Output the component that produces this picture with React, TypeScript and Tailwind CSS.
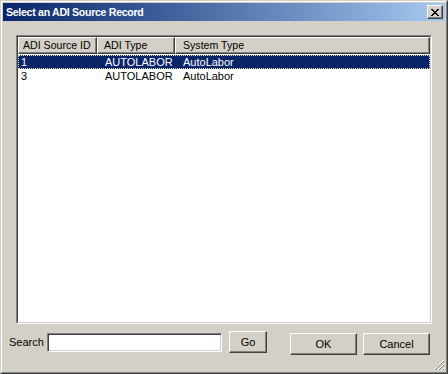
import React from "react";

const font = { fontFamily: '"Liberation Sans", Arial, sans-serif' };

function RaisedButton({ label, className }: { label: string; className: string }) {
  return (
    <div
      className={
        "flex items-center justify-center border border-t-white border-l-white border-r-[#404040] border-b-[#404040] shadow-[inset_-1px_-1px_0_#808080] bg-[#d4d0c8] text-[11px] text-black " +
        className
      }
    >
      {label}
    </div>
  );
}

export default function App() {
  const rows = [
    { id: "1", type: "AUTOLABOR", sys: "AutoLabor", sel: true },
    { id: "3", type: "AUTOLABOR", sys: "AutoLabor", sel: false },
  ];
  return (
    <div className="w-[448px] h-[374px] relative" style={font}>
      <div className="w-full h-full border border-t-[#d4d0c8] border-l-[#d4d0c8] border-r-[#404040] border-b-[#404040] bg-[#d4d0c8]">
        <div className="w-full h-full border border-t-white border-l-white border-r-[#808080] border-b-[#808080] p-px flex flex-col">
          {/* Title bar */}
          <div className="h-[18px] flex items-center justify-between pl-[3px] pr-[2px] bg-gradient-to-r from-[#0a246a] to-[#a6caf0]">
            <span className="text-white font-bold text-[10.6px] tracking-[-0.3px] leading-none">Select an ADI Source Record</span>
            <div className="w-[16px] h-[14px] flex items-center justify-center border border-t-white border-l-white border-r-[#404040] border-b-[#404040] shadow-[inset_-1px_-1px_0_#808080] bg-[#d4d0c8]">
              <svg width="8" height="7" viewBox="0 0 8 7" shapeRendering="crispEdges">
                <path
                  d="M0 0h2v1H0zM6 0h2v1H6zM1 1h2v1H1zM5 1h2v1H5zM2 2h4v1H2zM3 3h2v1H3zM2 4h4v1H2zM1 5h2v1H1zM5 5h2v1H5zM0 6h2v1H0zM6 6h2v1H6z"
                  fill="#000"
                />
              </svg>
            </div>
          </div>

          {/* List view */}
          <div className="mt-[14px] mx-[13px] h-[289px] border border-t-[#808080] border-l-[#808080] border-r-white border-b-white">
            <div className="w-full h-full border border-t-[#404040] border-l-[#404040] border-r-[#d4d0c8] border-b-[#d4d0c8] bg-white flex flex-col">
              <div className="flex h-[17px] text-[10.6px] text-black">
                <div className="w-[79px] flex items-center pl-[4px] bg-[#d4d0c8] border border-t-white border-l-white border-r-[#404040] border-b-[#404040] shadow-[inset_-1px_-1px_0_#808080]">
                  ADI Source ID
                </div>
                <div className="w-[78px] flex items-center pl-[6px] bg-[#d4d0c8] border border-t-white border-l-white border-r-[#404040] border-b-[#404040] shadow-[inset_-1px_-1px_0_#808080]">
                  ADI Type
                </div>
                <div className="flex-1 flex items-center pl-[7px] bg-[#d4d0c8] border border-t-white border-l-white border-r-[#404040] border-b-[#404040] shadow-[inset_-1px_-1px_0_#808080]">
                  System Type
                </div>
              </div>
              <div className="flex flex-col pt-px">
                {rows.map((r) => (
                  <div
                    key={r.id}
                    className={
                      "flex h-[14px] items-center text-[11px] leading-none border " +
                      (r.sel ? "bg-[#0a246a] text-white border-dotted border-[#e8e0b0]" : "text-black border-transparent")
                    }
                  >
                    <div className="w-[79px] pl-[2px]">{r.id}</div>
                    <div className="w-[78px] pl-[7px]">{r.type}</div>
                    <div className="flex-1 pl-[7px]">{r.sys}</div>
                  </div>
                ))}
              </div>
            </div>
          </div>

          {/* Bottom row */}
          <div className="mt-[7px] flex items-start">
            <div className="w-[38px] ml-[6px] mt-[5px] text-[11px] leading-[13px] text-black">Search</div>
            <div className="mt-[2px] w-[175px] h-[19px] border border-t-[#808080] border-l-[#808080] border-r-white border-b-white shadow-[inset_1px_1px_0_#404040,inset_-1px_-1px_0_#d4d0c8] bg-white"></div>
            <RaisedButton label="Go" className="ml-[7px] w-[38px] h-[22px]" />
            <RaisedButton label="OK" className="ml-[23px] mt-[2px] w-[67px] h-[22px]" />
            <RaisedButton label="Cancel" className="ml-[6px] mt-[2px] w-[67px] h-[22px]" />
          </div>
        </div>
      </div>
      <svg className="absolute right-[3px] bottom-[3px]" width="12" height="12" viewBox="0 0 12 12" shapeRendering="crispEdges">
        <path d="M11 1L1 11M11 5L5 11M11 9L9 11" stroke="#ffffff" strokeWidth="1" />
        <path d="M11 2L2 11M11 6L6 11M11 10L10 11" stroke="#808080" strokeWidth="1" />
      </svg>
    </div>
  );
}
